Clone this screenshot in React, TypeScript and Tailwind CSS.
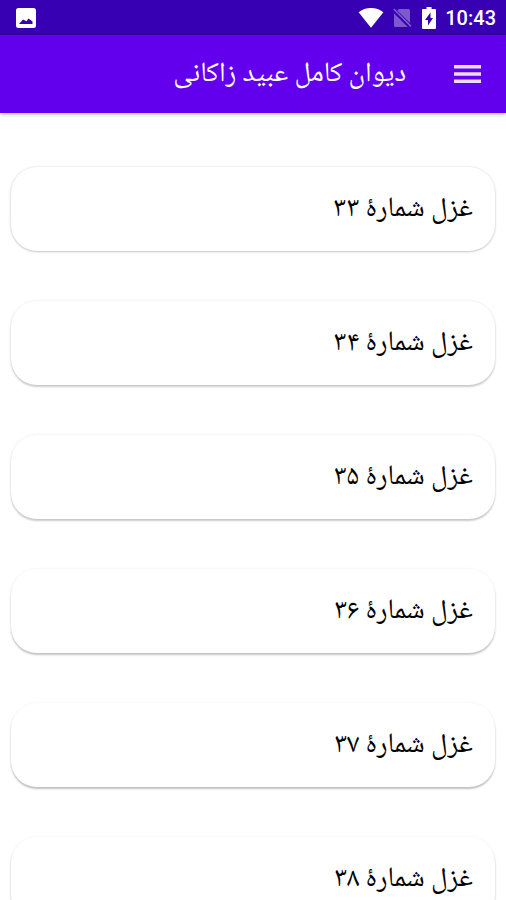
const poems = [
  { id: 33, title: "غزل شمارهٔ ۳۳", shadow: "shadow-[0_1px_2px_rgba(0,0,0,0.18),0_0_3px_rgba(0,0,0,0.12)]" },
  { id: 34, title: "غزل شمارهٔ ۳۴", shadow: "shadow-[0_2px_2px_rgba(0,0,0,0.18),0_0_3px_rgba(0,0,0,0.1)]" },
  { id: 35, title: "غزل شمارهٔ ۳۵", shadow: "shadow-[0_2px_2px_rgba(0,0,0,0.2),0_0_3px_rgba(0,0,0,0.08)]" },
  { id: 36, title: "غزل شمارهٔ ۳۶", shadow: "shadow-[0_2px_2px_rgba(0,0,0,0.22),0_0_3px_rgba(0,0,0,0.06)]" },
  { id: 37, title: "غزل شمارهٔ ۳۷", shadow: "shadow-[0_2px_2px_rgba(0,0,0,0.24),0_0_3px_rgba(0,0,0,0.05)]" },
  { id: 38, title: "غزل شمارهٔ ۳۸", shadow: "shadow-[0_2px_2px_rgba(0,0,0,0.26),0_0_3px_rgba(0,0,0,0.05)]" },
];

function StatusBar() {
  return (
    <div
      dir="ltr"
      className="flex h-[35px] shrink-0 items-center justify-between bg-[#3700b3] pr-[10px] pl-4 text-white"
    >
      <svg viewBox="0 0 20 20" className="size-5" fill="currentColor" aria-hidden>
        <path
          fillRule="evenodd"
          d="M2.5 0h15A2.5 2.5 0 0 1 20 2.5v15a2.5 2.5 0 0 1-2.5 2.5h-15A2.5 2.5 0 0 1 0 17.5v-15A2.5 2.5 0 0 1 2.5 0ZM3 16h13.500v-2.500L12.500 10.500 10.500 13.200 7 11.500Z"
        />
      </svg>

      <div className="flex items-center">
        <svg viewBox="0 0 26 20" className="h-5 w-[26px]" fill="currentColor" aria-hidden>
          <path d="M13 19.800.600 4.200C4 1.500 8.300 0 13 0s9 1.500 12.400 4.200Z" />
        </svg>
        <svg viewBox="0 0 20 20" className="ml-2 h-5 w-5 opacity-35" fill="currentColor" aria-hidden>
          <path d="M7 1h9.500A1.500 1.500 0 0 1 18 2.500v12.600L5.200 2.500ZM2 5.300 15.800 19H3.500A1.500 1.500 0 0 1 2 17.500Z" />
          <path d="m1.200 1.600 1.200-1.200L19.600 17.700l-1.200 1.200Z" />
        </svg>
        <svg viewBox="0 0 14 22" className="ml-[10px] h-[22px] w-[14px]" fill="currentColor" aria-hidden>
          <path
            fillRule="evenodd"
            d="M4.500 0h5v2H13a1 1 0 0 1 1 1v18a1 1 0 0 1-1 1H1a1 1 0 0 1-1-1V3a1 1 0 0 1 1-1h3.500ZM8.500 5.500 3 13h3v5.500L11 11H8.500Z"
          />
        </svg>
        <span className="ml-[9px] font-[Roboto,sans-serif] text-xl leading-6 font-medium">10:43</span>
      </div>
    </div>
  );
}

export default function App() {
  return (
    <div
      dir="rtl"
      lang="fa"
      className="flex h-screen flex-col overflow-hidden bg-white font-['Noto_Naskh_Arabic_UI','Noto_Naskh_Arabic','DejaVu_Sans',sans-serif]"
    >
      <StatusBar />

      <header className="relative z-10 flex h-[78px] shrink-0 items-center gap-12 bg-[#6200ee] px-[25px] text-white shadow-[0_1px_4px_rgba(0,0,0,0.35)]">
        <button type="button" aria-label="منو" className="h-5 w-[27px]">
          <svg viewBox="0 0 27 20" className="h-5 w-[27px]" fill="#e8ddff" aria-hidden>
            <path d="M0 1h27v3.500H0ZM0 8.200h27v3.500H0ZM0 15.400h27v3.500H0Z" />
          </svg>
        </button>
        <h1 className="text-[28px] leading-10 font-normal">دیوان کامل عبید زاکانی</h1>
      </header>

      <main className="flex-1 overflow-y-auto px-[11px] pt-[54px] [scrollbar-width:none]">
        <ul className="flex flex-col gap-[50px] pb-[50px]">
          {poems.map((poem) => (
            <li key={poem.id}>
              <a
                href={`#ghazal-${poem.id}`}
                className={`flex h-[84px] items-center rounded-[26px] bg-white px-[22px] text-[28px] leading-10 text-black ${poem.shadow}`}
              >
                {poem.title}
              </a>
            </li>
          ))}
        </ul>
      </main>
    </div>
  );
}
